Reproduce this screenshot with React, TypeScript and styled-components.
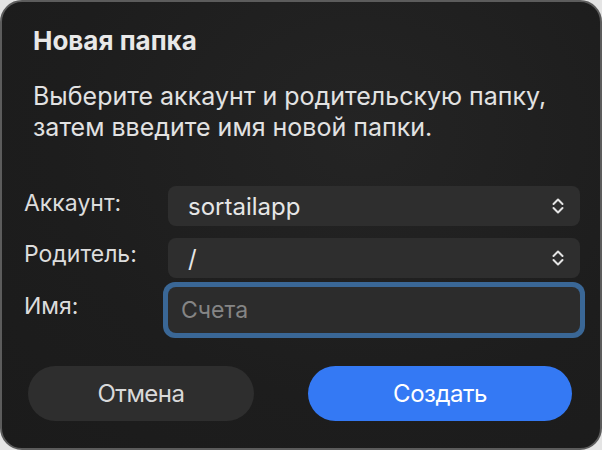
import styled, { createGlobalStyle } from "styled-components"

// #region styled
const Global = createGlobalStyle`
  html, body {
    margin: 0;
    padding: 0;
    background: #e4e4e4;
  }
  * {
    box-sizing: border-box;
  }
`

const Dialog = styled.div`
  width: 602px;
  height: 450px;
  border-radius: 22px;
  border: 2px solid #5c5c5c;
  background: radial-gradient(ellipse at 60% 30%, #242424 0%, #1d1d1d 60%, #1b1b1b 100%);
  color: #e6e6e6;
  font-family: Inter, "Noto Sans", sans-serif;
  display: flex;
  flex-direction: column;
  overflow: hidden;
`

const Title = styled.h1`
  margin: 0;
  padding: 24px 0 0 31px;
  font-size: 26px;
  font-weight: 700;
  line-height: 30px;
  color: #e8e8e8;
`

const Text = styled.p`
  margin: 0;
  padding: 25px 0 0 31px;
  font-size: 25px;
  line-height: 31px;
  color: #e2e2e2;
  white-space: nowrap;
`

const Form = styled.div`
  display: grid;
  grid-template-columns: 144px 1fr;
  row-gap: 12px;
  padding: 43px 20px 0 22px;
  align-items: start;
`

const Label = styled.label<{ $top?: number }>`
  font-size: 23px;
  line-height: 28px;
  padding-top: ${(p) => p.$top ?? 3}px;
  color: #dcdcdc;
`

const Select = styled.div`
  height: 40px;
  border-radius: 8px;
  background: #2e2e2e;
  display: flex;
  align-items: center;
  justify-content: space-between;
  padding: 0 15px 0 20px;
  font-size: 24px;
  color: #e6e6e6;
`

const Field = styled.div`
  padding: 5px;
  margin: -8px 0 0 -5px;
  width: calc(100% + 10px);
  border-radius: 12px;
  background: #3a6796;
`

const Input = styled.input`
  display: block;
  width: 100%;
  height: 46px;
  border: none;
  outline: none;
  border-radius: 8px;
  background: #2c2c2c;
  padding: 0 13px;
  font-family: inherit;
  font-size: 23px;
  color: #e6e6e6;

  &::placeholder {
    color: #858585;
  }
`

const Actions = styled.div`
  display: flex;
  justify-content: space-between;
  padding: 28px 28px 0 26px;
`

const Button = styled.button<{ $primary?: boolean; $w: number }>`
  width: ${(p) => p.$w}px;
  height: 55px;
  border: none;
  border-radius: 28px;
  font-family: inherit;
  font-size: 24px;
  font-weight: 400;
  letter-spacing: -0.5px;
  background: ${(p) => (p.$primary ? "#3479f4" : "#2e2e2e")};
  color: ${(p) => (p.$primary ? "#ffffff" : "#d9d9d9")};
`
// #endregion

const Chevrons = () => (
  <svg width="14" height="18" viewBox="0 0 14 18" fill="none" stroke="#e4e4e4" strokeWidth="2" strokeLinecap="round" strokeLinejoin="round">
    <path d="M2.5 7 L7 2.5 L11.5 7" />
    <path d="M2.5 11 L7 15.5 L11.5 11" />
  </svg>
)

const App = () => {
  return (
    <>
      <Global />
      <Dialog>
        <Title>Новая папка</Title>
        <Text>
          Выберите аккаунт и родительскую папку,
          <br />
          затем введите имя новой папки.
        </Text>

        <Form>
          <Label>Аккаунт:</Label>
          <Select>
            sortailapp
            <Chevrons />
          </Select>

          <Label $top={2}>Родитель:</Label>
          <Select>
            /
            <Chevrons />
          </Select>

          <Label $top={2}>Имя:</Label>
          <Field>
            <Input placeholder="Счета" />
          </Field>
        </Form>

        <Actions>
          <Button $w={226}>Отмена</Button>
          <Button $w={264} $primary>
            Создать
          </Button>
        </Actions>
      </Dialog>
    </>
  )
}

export default App
